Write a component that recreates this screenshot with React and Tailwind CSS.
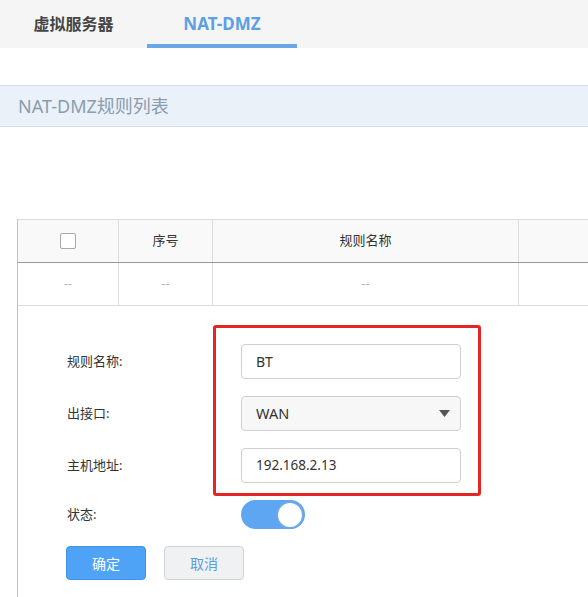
import React from "react";

const font = { fontFamily: '"Noto Sans", "Noto Sans CJK SC", sans-serif' };

function Field({ label, children }) {
  return (
    <div className="flex items-center h-[35px]">
      <div className="w-[174px] text-[13px] text-[#333]">{label}</div>
      {children}
    </div>
  );
}

export default function App() {
  return (
    <div className="w-[588px] h-[597px] overflow-hidden bg-white relative" style={font}>
      {/* Tabs */}
      <div className="h-[48px] bg-[#f5f5f5] flex">
        <div className="w-[147px] flex items-center justify-center text-[16px] font-bold text-[#454545] pb-[1px]">
          虚拟服务器
        </div>
        <div className="w-[150px] relative flex items-center justify-center text-[17px] font-bold text-[#5c9fe2] pb-[1px]">
          NAT-DMZ
          <div className="absolute left-0 right-0 bottom-0 h-[4px] bg-[#6ba7e3]" />
        </div>
      </div>

      {/* Section header */}
      <div className="mt-[37px] h-[42px] bg-[#ebf1f9] border-t border-b border-[#d6dee7] flex items-center pl-[18px] text-[18px] text-[#8a9caf]">
        NAT-DMZ规则列表
      </div>

      {/* Table */}
      <div className="mt-[92px] ml-[17px] w-[640px] border-l border-[#b9c2cb]">
        <div className="flex h-[44px] bg-[#f9f9f9] border-t border-[#dcdcdc] border-b border-b-[#8f9ba7] text-[13px] text-[#333]">
          <div className="w-[101px] flex items-center justify-center border-r border-[#dcdcdc]">
            <div className="w-[16px] h-[16px] border border-[#a9a9a9] rounded-[2px] bg-white" />
          </div>
          <div className="w-[94px] flex items-center justify-center border-r border-[#dcdcdc]">序号</div>
          <div className="w-[306px] flex items-center justify-center border-r border-[#dcdcdc]">规则名称</div>
          <div className="flex-1" />
        </div>
        <div className="flex h-[43px] border-b border-[#dcdcdc] text-[13px] text-[#b5b5b5]">
          <div className="w-[101px] flex items-center justify-center border-r border-[#dcdcdc]">--</div>
          <div className="w-[94px] flex items-center justify-center border-r border-[#dcdcdc]">--</div>
          <div className="w-[306px] flex items-center justify-center border-r border-[#dcdcdc]">--</div>
          <div className="flex-1" />
        </div>

        {/* Form */}
        <div className="pl-[49px] pt-[38px] pb-[40px] flex flex-col gap-[17px]">
          <Field label="规则名称:">
            <div className="w-[220px] h-[35px] border border-[#cfcfcf] rounded-[4px] bg-white flex items-center pl-[14px] text-[14px] text-[#333]">
              BT
            </div>
          </Field>
          <Field label="出接口:">
            <div className="w-[220px] h-[35px] border border-[#cfcfcf] rounded-[4px] bg-[#f7f7f7] flex items-center justify-between pl-[14px] pr-[10px] text-[14.5px] text-[#333]">
              <span>WAN</span>
              <svg width="11" height="7" viewBox="0 0 11 7">
                <path d="M0 0 H11 L5.5 7 Z" fill="#555" />
              </svg>
            </div>
          </Field>
          <Field label="主机地址:">
            <div className="w-[220px] h-[35px] border border-[#cfcfcf] rounded-[4px] bg-white flex items-center pl-[14px] text-[13.5px] text-[#333]">
              192.168.2.13
            </div>
          </Field>
          <div className="flex items-center h-[29px]">
            <div className="w-[174px] text-[13px] text-[#333]">状态:</div>
            <div className="w-[64px] h-[29px] rounded-full bg-[#5ea6f2] flex items-center justify-end pr-[1px]">
              <div className="w-[28px] h-[28px] rounded-full bg-white border-[2px] border-[#6aa9ea]" />
            </div>
          </div>
          <div className="flex gap-[18px] -ml-[1px]">
            <div className="w-[80px] h-[34px] rounded-[4px] bg-[#4ea3f7] border border-[#3f92e6] flex items-center justify-center text-[14px] text-white">
              确定
            </div>
            <div className="w-[80px] h-[34px] rounded-[4px] bg-[#f0f1f3] border border-[#d2d2d2] flex items-center justify-center text-[14px] text-[#5a9de0]">
              取消
            </div>
          </div>
        </div>
      </div>

      {/* Red annotation box */}
      <div className="absolute left-[213px] top-[325px] w-[268px] h-[171px] border-[3px] border-[#e52424] rounded-[3px]" />
    </div>
  );
}
